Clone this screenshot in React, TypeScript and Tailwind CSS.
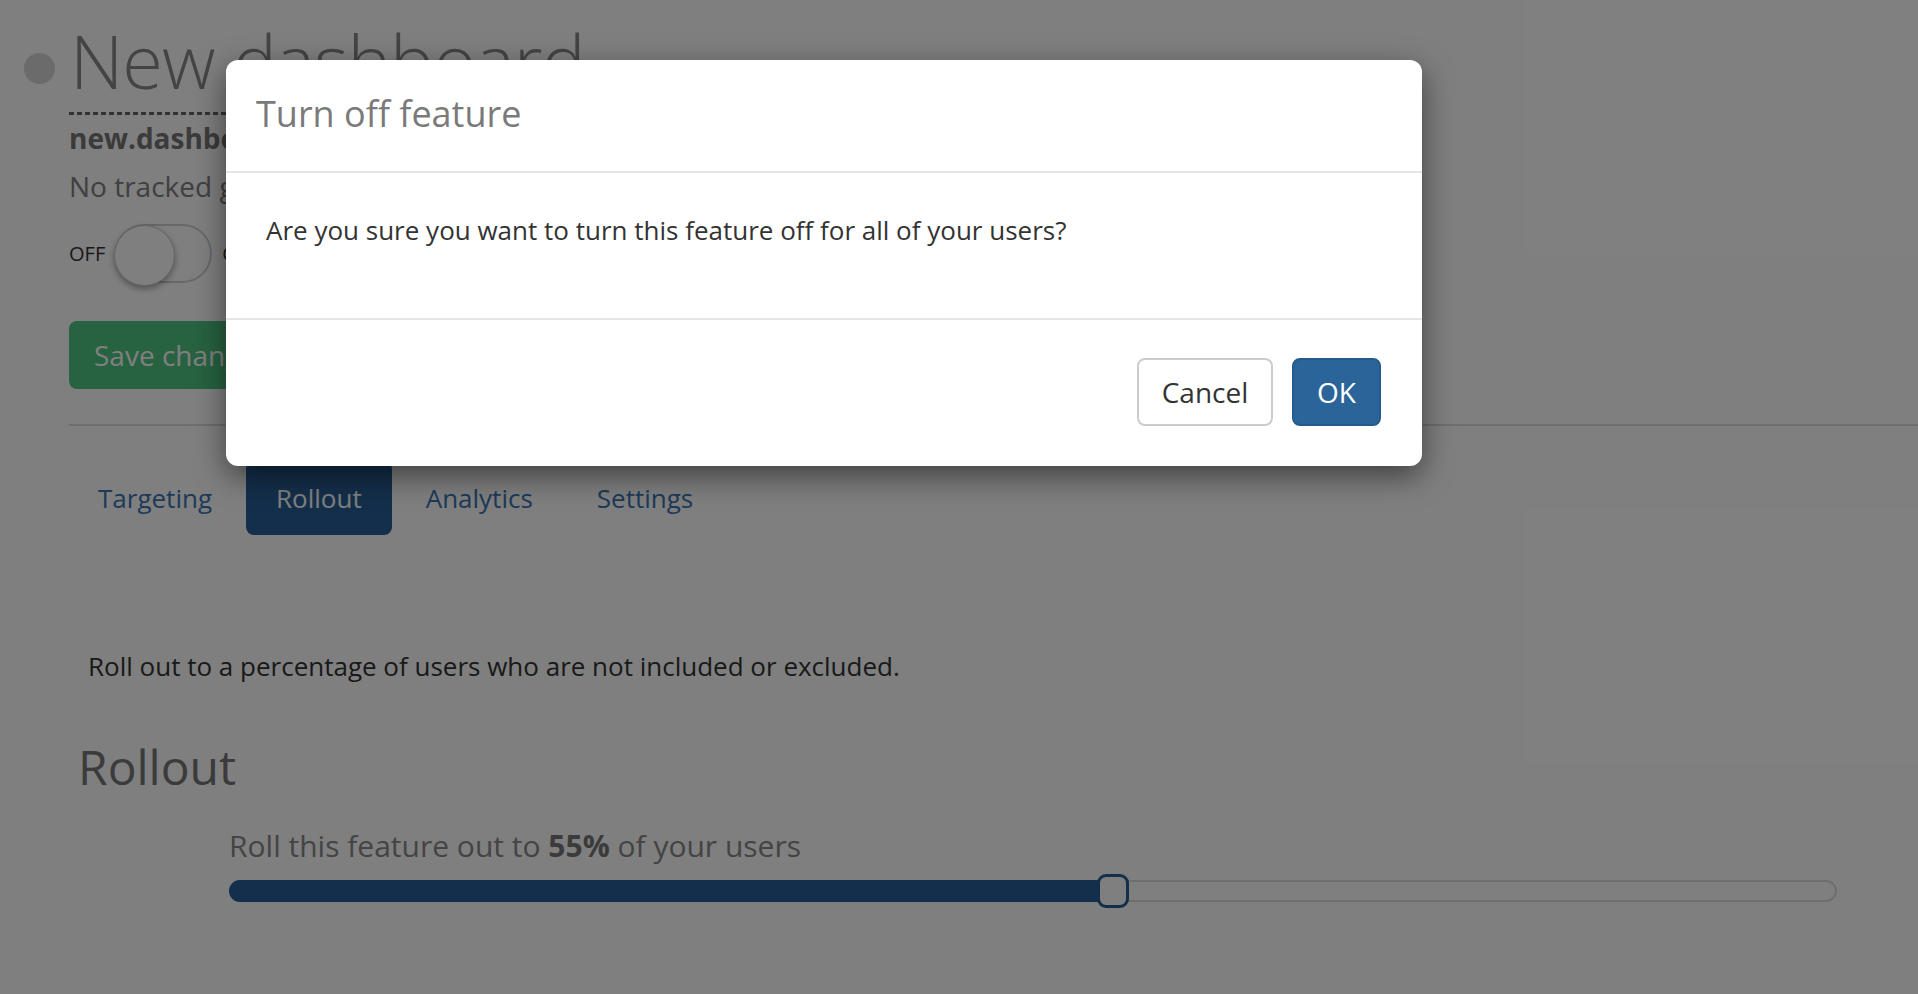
const font = { fontFamily: '"Open Sans", "Liberation Sans", sans-serif' };

function Toggle() {
  return (
    <div className="flex items-center gap-[10px]">
      <span className="text-[20px] text-[#333]">OFF</span>
      <div className="relative h-[59px] w-[97px] rounded-full border-2 border-[#d0d0d0] bg-white">
        <div className="absolute -left-[3px] -top-[1px] h-[61px] w-[61px] rounded-full border border-[#c8c8c8] bg-white shadow-[0_3px_6px_rgba(0,0,0,0.35)]" />
      </div>
      <span className="text-[20px] text-[#333]">ON</span>
    </div>
  );
}

function Tabs() {
  const tabs = ["Targeting", "Rollout", "Analytics", "Settings"];
  return (
    <div className="flex gap-[4px]">
      {tabs.map((t) => (
        <div
          key={t}
          className={`flex h-[74px] items-center rounded-[8px] px-[30px] text-[26px] ${
            t === "Rollout" ? "bg-[#285f97] text-white" : "text-[#3a74b2]"
          }`}
        >
          {t}
        </div>
      ))}
    </div>
  );
}

function Slider({ value }: { value: number }) {
  return (
    <div className="relative h-[22px] w-[1608px] rounded-full border-2 border-[#dcdcdc] bg-white">
      <div
        className="absolute -left-[2px] -top-[2px] h-[22px] rounded-l-full bg-[#265e97]"
        style={{ width: `${value}%` }}
      />
      <div
        className="absolute -top-[8px] h-[34px] w-[32px] -translate-x-1/2 rounded-[9px] border-[3px] border-[#265e97] bg-white"
        style={{ left: `${value}%` }}
      />
    </div>
  );
}

function Modal() {
  return (
    <div className="absolute left-[226px] top-[60px] w-[1196px] rounded-[12px] bg-white shadow-[0_10px_30px_rgba(0,0,0,0.5)]">
      <div className="border-b-2 border-[#e5e5e5] pb-[32px] pl-[30px] pt-[28px]">
        <h4 className="text-[36px] leading-[51px] text-[#7a7a7a]">Turn off feature</h4>
      </div>
      <div className="border-b-2 border-[#e5e5e5] pb-[68px] pl-[40px] pt-[37px]">
        <p className="text-[26px] leading-[40px] text-[#333]">
          Are you sure you want to turn this feature off for all of your users?
        </p>
      </div>
      <div className="flex justify-end gap-[19px] pb-[40px] pr-[41px] pt-[38px]">
        <button className="h-[68px] w-[136px] rounded-[8px] border-2 border-[#cccccc] bg-white text-[28px] text-[#333]">
          Cancel
        </button>
        <button className="h-[68px] w-[89px] rounded-[8px] border-2 border-[#245a8c] bg-[#2b6499] text-[28px] text-white">
          OK
        </button>
      </div>
    </div>
  );
}

export default function App() {
  return (
    <div className="relative h-[994px] w-[1918px] overflow-hidden bg-white" style={font}>
      <div className="pt-[17px]">
        {/* title */}
        <div className="flex items-start pl-[24px]">
          <div className="mr-[15px] mt-[36px] h-[31px] w-[31px] rounded-full bg-[#d6d6d6]" />
          <h1 className="text-[74px] font-light leading-[88px] tracking-[-1px] text-[#888]">New dashboard</h1>
        </div>
        <div className="ml-[69px] mt-[7px] h-[3px] w-[520px] bg-[repeating-linear-gradient(to_right,#666_0_5px,transparent_5px_8px)]" />
        <div className="pl-[69px]">
          <div className="mt-[3px] text-[28px] font-bold leading-[40px] text-[#777]">new.dashboard</div>
          <div className="mt-[8px] text-[28px] leading-[40px] text-[#808080]">No tracked goals</div>
          <div className="mt-[18px]">
            <Toggle />
          </div>
          <button className="mt-[38px] flex h-[68px] items-center rounded-[8px] bg-[#4fc483] px-[25px] text-[28px] text-white">
            Save changes
          </button>
        </div>
        <div className="ml-[69px] mt-[35px] h-[2px] bg-[#dddddd]" />
        <div className="mt-[35px] pl-[68px]">
          <Tabs />
        </div>
        <p className="mt-[111px] pl-[88px] text-[26px] leading-[40px] text-[#333]">
          Roll out to a percentage of users who are not included or excluded.
        </p>
        <h3 className="mt-[51px] pl-[78px] text-[48px] leading-[60px] text-[#777]">Rollout</h3>
        <div className="mt-[29px] pl-[229px]">
          <div className="text-[30px] leading-[40px] text-[#888]">
            Roll this feature out to <b className="text-[#777]">55%</b> of your users
          </div>
          <div className="mt-[14px]">
            <Slider value={55} />
          </div>
        </div>
      </div>
      <div className="absolute inset-0 bg-black/50" />
      <Modal />
    </div>
  );
}
